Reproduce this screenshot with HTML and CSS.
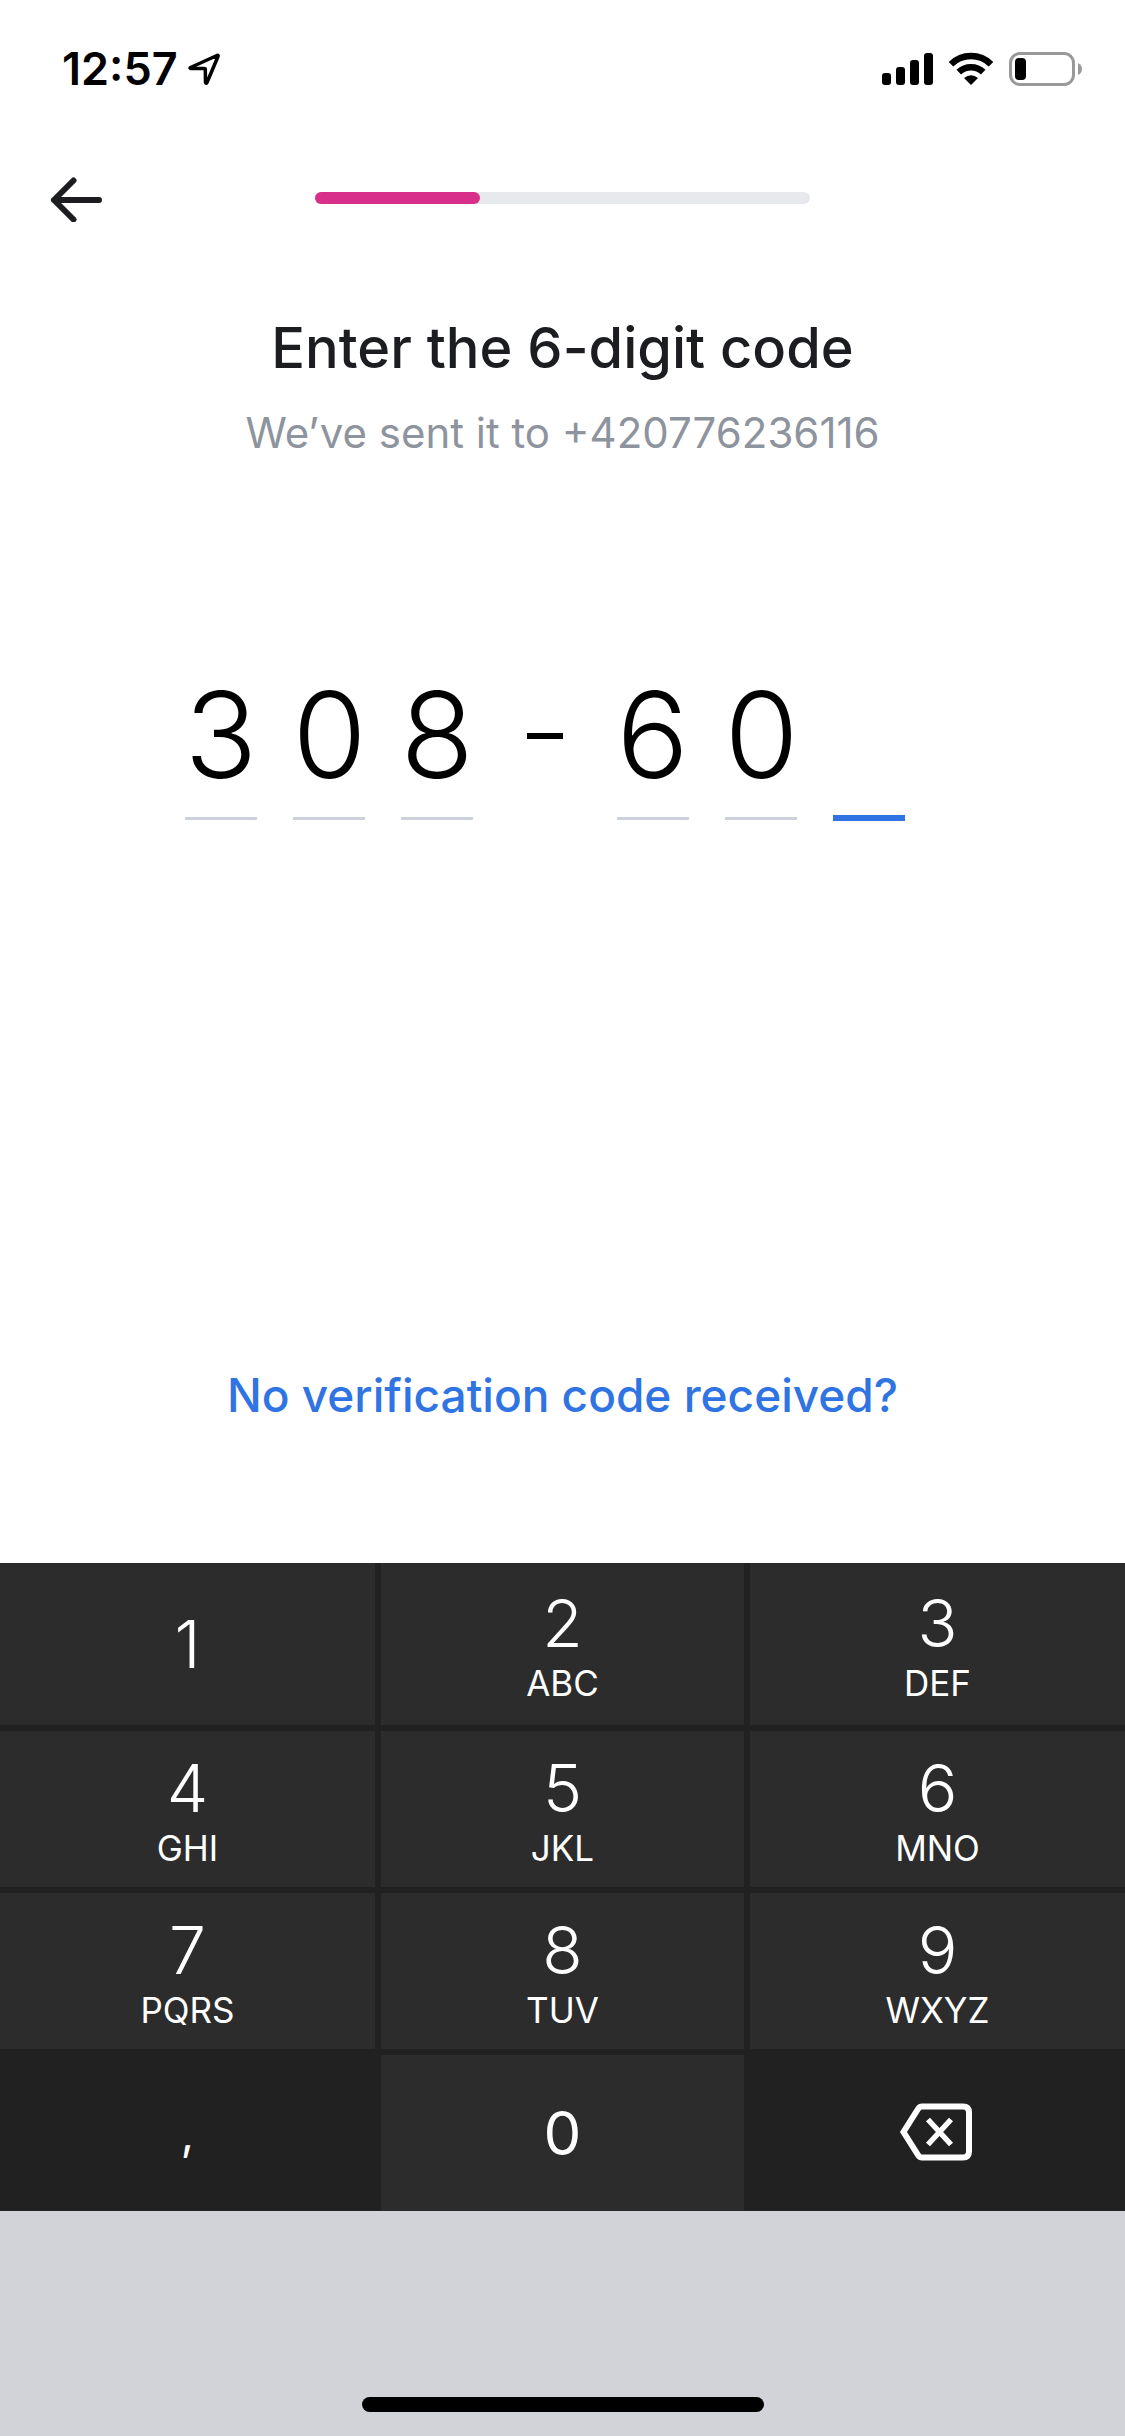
FILE: index.html
```html
<!DOCTYPE html>
<html lang="en">
<head>
    <meta charset="UTF-8">
    <meta name="viewport" content="width=device-width, initial-scale=1.0">
    <title>Enter the 6-digit code</title>
    <link rel="stylesheet" href="styles.css">
</head>
<body>

<div class="status-bar">
    <div class="status-left">
        <span class="time">12:57</span>
        <svg class="location-icon" width="32" height="34" viewBox="0 0 32 34">
            <path d="M2.5 15.5 L29 3.5 Q30.500 3 30 4.500 L19 30.500 Q18 32 17.500 30.500 L17.300 17 Q17.300 16.500 16.500 16.500 L3 16.500 Q1.500 16.200 2.500 15.500 Z" fill="none" stroke="#000" stroke-width="3.500" stroke-linejoin="round"/>
        </svg>
    </div>
    <div class="status-right">
        <svg width="51" height="34" viewBox="0 0 51 34">
            <rect x="0" y="21" width="9" height="12" rx="3"/>
            <rect x="14" y="15" width="9" height="18" rx="3"/>
            <rect x="28" y="8" width="9" height="25" rx="3"/>
            <rect x="42" y="1" width="9" height="32" rx="3"/>
        </svg>
        <svg width="46" height="34" viewBox="0 0 46 34">
            <path d="M3 12.200 A28.500 28.500 0 0 1 43 12.200" fill="none" stroke="#000" stroke-width="6.500"/>
            <path d="M10.800 20.200 A17.500 17.500 0 0 1 35.200 20.200" fill="none" stroke="#000" stroke-width="6.500"/>
            <path d="M16 26 Q23 20.500 30 26 L23 33 Z"/>
        </svg>
        <svg width="74" height="34" viewBox="0 0 74 34">
            <rect x="1.5" y="1.5" width="63" height="31" rx="9.500" fill="none" stroke="#999" stroke-width="3"/>
            <rect x="6" y="6" width="11" height="22" rx="4"/>
            <path d="M69 11 Q73 13 73 17 Q73 21 69 23 Z" fill="#999"/>
        </svg>
    </div>
</div>

<header class="header">
    <button class="back-button" type="button" aria-label="Back">
        <svg width="54" height="48" viewBox="0 0 54 48">
            <path d="M50 26 H5 M24.500 6.500 L5 26 L24.500 45.500" fill="none" stroke="#1b1d21" stroke-width="6" stroke-linecap="round" stroke-linejoin="round"/>
        </svg>
    </button>
    <div class="progress">
        <div class="progress-value"></div>
    </div>
</header>

<main class="content">
    <h1>Enter the 6-digit code</h1>
    <p class="subtitle">We’ve sent it to +420776236116</p>

    <form class="code" id="codeForm">
        <input type="text" inputmode="numeric" maxlength="1" value="3" aria-label="Digit 1">
        <input type="text" inputmode="numeric" maxlength="1" value="0" aria-label="Digit 2">
        <input type="text" inputmode="numeric" maxlength="1" value="8" aria-label="Digit 3">
        <span class="dash"></span>
        <input type="text" inputmode="numeric" maxlength="1" value="6" aria-label="Digit 4">
        <input type="text" inputmode="numeric" maxlength="1" value="0" aria-label="Digit 5">
        <input class="active" type="text" inputmode="numeric" maxlength="1" value="" aria-label="Digit 6">
    </form>

    <a class="help-link" href="#">No verification code received?</a>
</main>

<div class="keypad">
    <button type="button" class="key">1</button>
    <button type="button" class="key">2<span class="letters">ABC</span></button>
    <button type="button" class="key">3<span class="letters">DEF</span></button>
    <button type="button" class="key">4<span class="letters">GHI</span></button>
    <button type="button" class="key">5<span class="letters">JKL</span></button>
    <button type="button" class="key">6<span class="letters">MNO</span></button>
    <button type="button" class="key">7<span class="letters">PQRS</span></button>
    <button type="button" class="key">8<span class="letters">TUV</span></button>
    <button type="button" class="key">9<span class="letters">WXYZ</span></button>
    <button type="button" class="key key-dark key-comma">,</button>
    <button type="button" class="key key-zero">0</button>
    <button type="button" class="key key-dark" aria-label="Delete">
        <svg width="78" height="60" viewBox="0 0 78 60">
            <path d="M23 3.500 H64 Q70 3.500 70 9.500 V48.500 Q70 54.500 64 54.500 H23 Q20.500 54.500 19 52 L4.500 29 L19 6 Q20.500 3.500 23 3.500 Z" fill="none" stroke="#fff" stroke-width="6"/>
            <path d="M29 16.500 L52 41.500 M52 16.500 L29 41.500" fill="none" stroke="#fff" stroke-width="5.500"/>
        </svg>
    </button>
</div>

<footer class="home-area">
    <div class="home-indicator"></div>
</footer>

</body>
</html>
```
FILE: styles.css
```css
* {
    box-sizing: border-box;
}
body {
    margin: 0;
    min-height: 100vh;
    display: flex;
    flex-direction: column;
    background-color: #fff;
    font-family: Inter, "Liberation Sans", sans-serif;
    color: #1b1d21;
}
button {
    padding: 0;
    border: none;
    background: none;
    font-family: inherit;
    cursor: pointer;
}
.status-bar {
    display: flex;
    justify-content: space-between;
    align-items: center;
    height: 138px;
    padding: 0 42px 0 62px;
    color: #000;
}
.status-left, .status-right {
    display: flex;
    align-items: center;
}
.status-left {
    gap: 10px;
}
.status-right {
    gap: 15px;
}
.time {
    font-size: 45px;
    font-weight: 600;
    line-height: 54px;
}
.header {
    display: grid;
    grid-template-columns: 1fr 44% 1fr;
    align-items: center;
    height: 120px;
}
.back-button {
    justify-self: start;
    margin-left: 49px;
    line-height: 0;
}
.progress {
    height: 12px;
    border-radius: 6px;
    background-color: #e8e9ed;
}
.progress-value {
    width: 33.33%;
    height: 12px;
    border-radius: 6px;
    background-color: #d82f8a;
}
.content {
    flex: 1;
    display: flex;
    flex-direction: column;
    align-items: center;
    padding: 54px 48px 132px;
}
h1 {
    margin: 0;
    font-size: 56px;
    font-weight: 500;
    line-height: 72px;
}
.subtitle {
    margin: 22px 0 0;
    font-size: 42px;
    line-height: 54px;
    color: #8e949e;
}
.code {
    display: flex;
    align-items: flex-end;
    gap: 36px;
    margin: 198px 36px 0 0;
}
.code input {
    width: 72px;
    height: 162px;
    margin: 0 0 1px;
    padding: 0 0 6px;
    border: none;
    border-bottom: 3px solid #cdd2da;
    border-radius: 0;
    outline: none;
    background: none;
    font-family: inherit;
    font-size: 120px;
    font-weight: 300;
    text-align: center;
    color: #000;
}
.code input.active {
    margin-bottom: 0;
    border-bottom: 6px solid #3074e3;
}
.dash {
    width: 36px;
    height: 6px;
    margin: 0 18px 82px;
    background-color: #000;
}
.help-link {
    margin-top: auto;
    font-size: 46px;
    font-weight: 500;
    line-height: 72px;
    color: #3074e3;
    text-decoration: none;
}
.keypad {
    display: grid;
    grid-template-columns: repeat(3, 1fr);
    grid-template-rows: 162px 156px 156px 156px;
    row-gap: 6px;
    background-color: #212121;
}
.key {
    display: flex;
    flex-direction: column;
    justify-content: center;
    align-items: center;
    background-color: #2c2c2c;
    color: #fff;
    font-size: 66px;
    font-weight: 300;
    line-height: 78px;
}
.key:nth-child(3n + 2) {
    margin: 0 6px;
}
.letters {
    font-size: 35px;
    font-weight: 400;
    line-height: 42px;
}
.key-dark {
    background-color: #212121;
}
.key-comma {
    font-size: 46px;
    font-weight: 400;
}
.key-zero {
    font-size: 60px;
    font-weight: 400;
}
.home-area {
    display: flex;
    justify-content: center;
    align-items: flex-end;
    height: 225px;
    padding-bottom: 24px;
    background-color: #d2d3d8;
}
.home-indicator {
    width: 402px;
    height: 15px;
    border-radius: 8px;
    background-color: #000;
}
```
